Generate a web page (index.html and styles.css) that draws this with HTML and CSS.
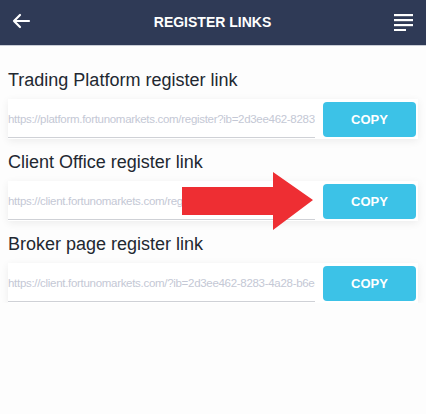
FILE: index.html
```html
<!DOCTYPE html>
<html>
    <head>
        <meta name="viewport" content="width=device-width, initial-scale=1"/>
        <meta charset="UTF-8">
        <title>Register Links</title>
        <link rel="stylesheet" href="styles.css">
    </head>
    <body>
        <div class="topbar">
            <svg class="back" width="20" height="16" viewBox="0 0 20 16">
                <path d="M18 8H3M9 2L3 8l6 6" fill="none" stroke="#fff" stroke-width="2.2" stroke-linecap="round" stroke-linejoin="round"/>
            </svg>
            <span class="title">REGISTER LINKS</span>
            <svg class="menu" width="20" height="17" viewBox="0 0 20 17">
                <rect x="0" y="0" width="19" height="2.2" fill="#fff"/>
                <rect x="0" y="5" width="19" height="2.2" fill="#fff"/>
                <rect x="0" y="10" width="19" height="2.2" fill="#fff"/>
                <rect x="0" y="15" width="12" height="2.2" fill="#fff"/>
            </svg>
        </div>

        <div class="content">
            <div class="block">
                <div class="label">Trading Platform register link</div>
                <div class="row">
                    <div class="field"><span>https://platform.fortunomarkets.com/register?ib=2d3ee462-8283-4a28-b6e</span></div>
                    <button class="copy">COPY</button>
                </div>
            </div>
            <div class="block">
                <div class="label">Client Office register link</div>
                <div class="row">
                    <div class="field"><span>https://client.fortunomarkets.com/register?ib=2d3ee462-8283</span></div>
                    <button class="copy">COPY</button>
                </div>
                <svg class="pointer" width="131" height="58" viewBox="0 0 131 58">
                    <polygon points="0,15 91,15 91,0 131,28 91,58 91,43 0,43" fill="#ee2e33"/>
                </svg>
            </div>
            <div class="block">
                <div class="label">Broker page register link</div>
                <div class="row">
                    <div class="field"><span>https://client.fortunomarkets.com/?ib=2d3ee462-8283-4a28-b6e8</span></div>
                    <button class="copy">COPY</button>
                </div>
            </div>
        </div>
    </body>
</html>
```

FILE: styles.css
```css
body{
    margin: 0;
    background-color: #fdfdfd;
    font-family: 'Liberation Sans', Arial, sans-serif;
}
.topbar{
    height: 45px;
    background-color: #2f3a56;
    border-bottom: 1px solid #c9cdd6;
    display: flex;
    align-items: center;
    justify-content: space-between;
    padding: 0 12px 0 11px;
}
.back{
    margin-top: -3px;
}
.title{
    color: white;
    font-weight: bold;
    font-size: 14px;
    margin-top: -2px;
}
.menu{
    margin-top: -1px;
}
.content{
    padding: 11px 8px 0 8px;
}
.block{
    position: relative;
    padding-top: 11px;
}
.label{
    font-size: 18px;
    color: #222831;
    line-height: 24px;
}
.row{
    margin-top: 7px;
    height: 40px;
    display: flex;
    align-items: center;
    background-color: white;
    box-shadow: 0 2px 8px rgba(0, 0, 0, 0.07);
}
.field{
    width: 307px;
    height: 36px;
    margin-top: 1px;
    border-bottom: 1.5px solid #cfd1d6;
    overflow: hidden;
    white-space: nowrap;
    display: flex;
    align-items: center;
}
.field span{
    font-size: 11.5px;
    letter-spacing: -0.3px;
    color: #c4c8d5;
}
.copy{
    margin-left: 8px;
    width: 93px;
    height: 35px;
    border: none;
    border-radius: 4px;
    background-color: #3cc2e7;
    color: white;
    font-weight: bold;
    font-size: 13px;
    font-family: 'Liberation Sans', Arial, sans-serif;
    padding: 0;
}
.pointer{
    position: absolute;
    left: 174px;
    top: 33px;
}
```
